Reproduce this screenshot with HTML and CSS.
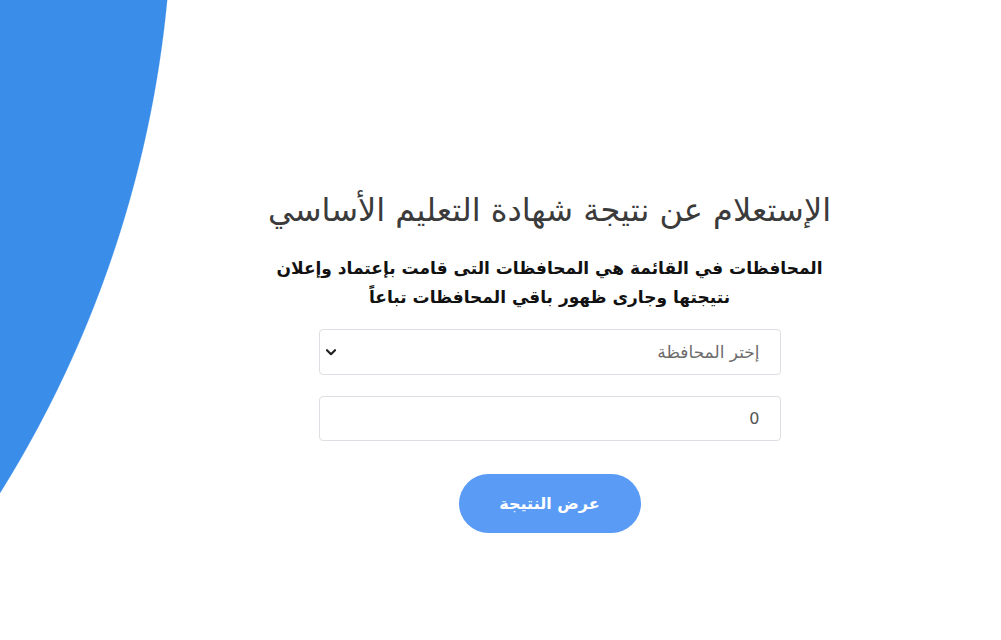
FILE: index.html
```html
<!DOCTYPE html>
<html lang="ar" dir="rtl">
<head>
<meta charset="utf-8">
<title>الإستعلام عن نتيجة شهادة التعليم الأساسي</title>
<link rel="stylesheet" href="styles.css">
</head>
<body>
<main class="page">
  <section class="card">
    <h1 class="title">الإستعلام عن نتيجة شهادة التعليم الأساسي</h1>
    <p class="note">المحافظات في القائمة هي المحافظات التى قامت بإعتماد وإعلان<br>نتيجتها وجارى ظهور باقي المحافظات تباعاً</p>
    <form class="form">
      <div class="select-wrap">
        <select class="field select">
          <option>إختر المحافظة</option>
        </select>
        <svg class="chev" width="10" height="7" viewBox="0 0 10 7"><path d="M1 1.2 L5 5.2 L9 1.2" fill="none" stroke="#222" stroke-width="2.2" stroke-linecap="round" stroke-linejoin="round"/></svg>
      </div>
      <input class="field input" type="text" value="0">
      <button class="btn" type="button">عرض النتيجة</button>
    </form>
  </section>
</main>
</body>
</html>
```
FILE: styles.css
```css
html, body {
  margin: 0;
  padding: 0;
}
body {
  font-family: "DejaVu Sans", "Noto Sans", sans-serif;
  color: #212529;
  height: 640px;
  background: radial-gradient(circle 1135px at -962px -108px, #3a8ee9 99.9%, #ffffff 100%) no-repeat;
  background-color: #fff;
}
.page {
  display: flex;
  justify-content: center;
  padding: 186px 0 0 98px;
  box-sizing: border-box;
  height: 640px;
}
.card {
  width: 580px;
  display: flex;
  flex-direction: column;
  align-items: center;
}
.title {
  margin: 0;
  font-size: 32px;
  font-weight: 400;
  color: #3b3b3b;
  line-height: 48px;
  white-space: nowrap;
}
.note {
  margin: 20px 0 0;
  font-size: 17px;
  font-weight: 700;
  color: #111;
  line-height: 29px;
  text-align: center;
  white-space: nowrap;
}
.form {
  margin-top: 17px;
  width: 462px;
  display: flex;
  flex-direction: column;
  align-items: center;
  gap: 21px;
}
.select-wrap {
  position: relative;
  width: 100%;
}
.field {
  display: block;
  width: 100%;
  height: 46px;
  box-sizing: border-box;
  border: 1px solid #dcdfe3;
  border-radius: 4px;
  background: #fff;
  padding: 0 20px;
  font-family: inherit;
  font-size: 16px;
  color: #555;
  direction: rtl;
  outline: none;
}
.select {
  appearance: none;
  -webkit-appearance: none;
  font-size: 17px;
  color: #6c6c6c;
}
.chev {
  position: absolute;
  left: 7px;
  top: 20px;
}
.input {
  height: 45px;
}
.btn {
  margin-top: 12px;
  width: 182px;
  height: 59px;
  border: none;
  border-radius: 30px;
  background: #5a9bf6;
  color: #fff;
  font-family: inherit;
  font-size: 16px;
  font-weight: 700;
  cursor: pointer;
}
```
